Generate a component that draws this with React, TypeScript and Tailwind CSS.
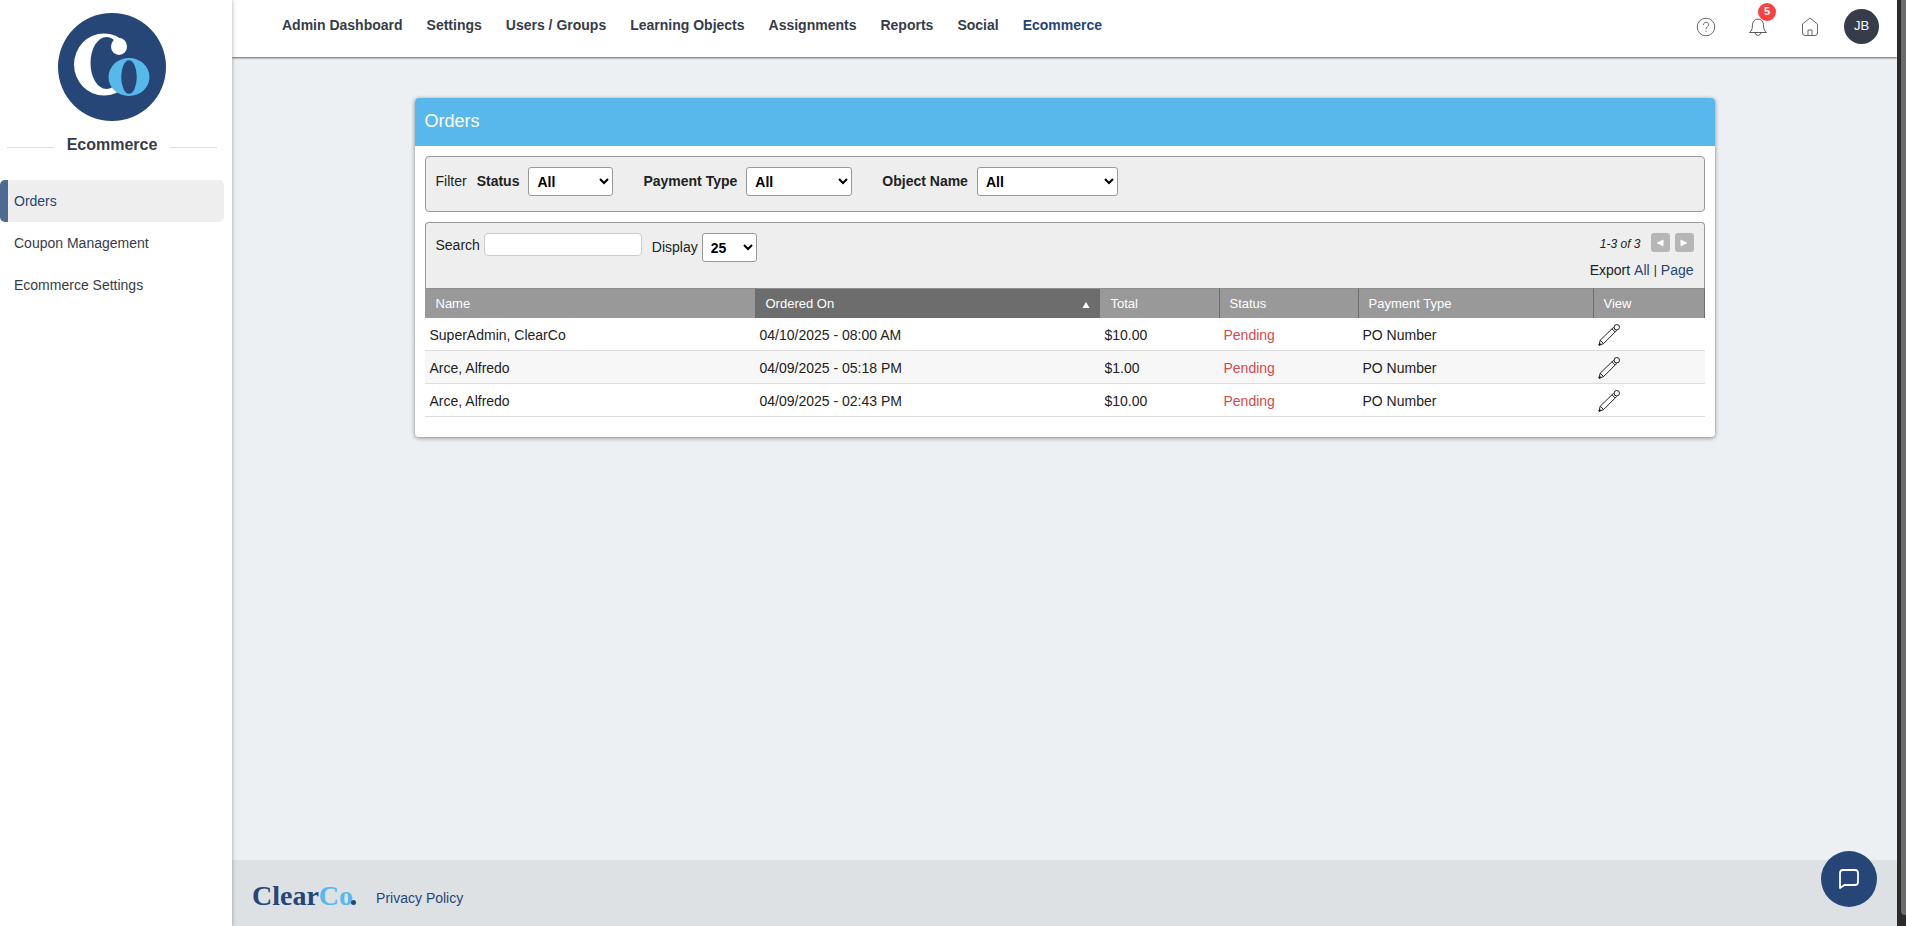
import type { ReactNode } from "react";

const navLinks = [
  "Admin Dashboard",
  "Settings",
  "Users / Groups",
  "Learning Objects",
  "Assignments",
  "Reports",
  "Social",
  "Ecommerce",
];

const sideLinks = ["Orders", "Coupon Management", "Ecommerce Settings"];

const orders = [
  { name: "SuperAdmin, ClearCo", date: "04/10/2025 - 08:00 AM", total: "$10.00" },
  { name: "Arce, Alfredo", date: "04/09/2025 - 05:18 PM", total: "$1.00" },
  { name: "Arce, Alfredo", date: "04/09/2025 - 02:43 PM", total: "$10.00" },
];

function Monogram() {
  return (
    <svg viewBox="0 0 108 108" className="size-[108px]" role="img" aria-label="ClearCo">
      <circle cx="54" cy="54" r="54" fill="#254677" />
      <ellipse cx="46" cy="51.5" rx="30" ry="31" fill="#fff" />
      <ellipse cx="48.5" cy="50" rx="16" ry="26" fill="#254677" />
      <rect x="53" y="36" width="26" height="26" fill="#254677" />
      <rect x="66" y="20" width="13" height="18" fill="#254677" />
      <ellipse cx="61" cy="33.5" rx="8" ry="8.5" fill="#fff" />
      <ellipse cx="71" cy="64" rx="20.5" ry="19" fill="#57b8ea" />
      <ellipse cx="71" cy="64" rx="7.8" ry="16.8" fill="#254677" />
    </svg>
  );
}

function Pencil() {
  return (
    <svg
      viewBox="0 0 22 22"
      className="size-[22px]"
      fill="none"
      stroke="#222"
      strokeWidth="1"
      strokeLinejoin="round"
    >
      <path d="M1 21.2 L2.2 16.2 L14 4.8 L17.2 8 L5.6 19.6 Z" />
      <path d="M2.2 16.2 L5.6 19.6" />
      <path d="M1 21.2 L2.6 19.6" strokeWidth="2" />
      <path d="M14 4.8 L15.4 3.6 L18.5 6.6 L17.2 8" />
      <circle cx="18.8" cy="3.2" r="2.7" />
    </svg>
  );
}

function Filter({ id, label, width }: { id: string; label: string; width: string }) {
  return (
    <div className="flex items-start gap-[9px]">
      <label htmlFor={id} className="leading-[29px] font-bold">
        {label}
      </label>
      <select
        id={id}
        className={`h-[29px] rounded-[3px] border border-[#999] bg-white pl-1 font-bold text-black ${width}`}
      >
        <option>All</option>
      </select>
    </div>
  );
}

function HeadCell({
  children,
  className,
}: {
  children: ReactNode;
  className: string;
}) {
  return (
    <th
      scope="col"
      className={`h-[30px] border-t border-l border-t-[#8e8e8e] px-[10px] pt-[2px] text-left text-[13px] font-normal text-white ${className}`}
    >
      {children}
    </th>
  );
}

export default function App() {
  return (
    <div className="flex min-h-screen bg-[#ecf0f3] font-['Liberation_Sans',Arial,sans-serif] text-sm text-[#222]">
      <aside className="z-10 w-[232px] shrink-0 bg-white pt-[13px] shadow-[0_0_4px_rgba(0,0,0,0.35)]">
        <div className="flex justify-center pr-2">
          <Monogram />
        </div>
        <div className="mt-3 flex items-center gap-[13px] pr-[15px] pl-[7px]">
          <span className="mt-[5px] h-px flex-1 bg-[#dedede]" />
          <h2 className="text-base font-bold text-[#363c4a]">Ecommerce</h2>
          <span className="mt-[5px] h-px flex-1 bg-[#dedede]" />
        </div>
        <nav className="mt-[23px] pr-2">
          {sideLinks.map((link, i) => (
            <a
              key={link}
              href="#"
              className={
                i === 0
                  ? "flex h-[42px] items-center rounded-[5px] border-l-8 border-[#4f6a92] bg-[#eee] pl-[6px] text-[#254677]"
                  : "flex h-[42px] items-center pl-[14px] text-[#363c4a]"
              }
            >
              {link}
            </a>
          ))}
        </nav>
      </aside>

      <div className="flex min-w-0 flex-1 flex-col">
        <header className="flex h-[57px] items-start justify-between bg-white pr-[18px] pl-[50px] shadow-[0_1px_2px_rgba(0,0,0,0.6)]">
          <nav className="flex gap-6 pt-[15px] font-bold text-[#363c4a]">
            {navLinks.map((link) => (
              <a
                key={link}
                href="#"
                className={link === "Ecommerce" ? "text-[#254677]" : ""}
              >
                {link}
              </a>
            ))}
          </nav>
          <div className="flex items-center pt-[9px]">
            <button type="button" aria-label="Help" className="mr-8">
              <svg viewBox="0 0 20 20" className="size-5" fill="none" stroke="#444" strokeWidth="0.8">
                <circle cx="10" cy="10" r="8.8" />
                <path d="M7.4 8 C7.4 4.4 12.6 4.4 12.6 7.8 C12.6 9.8 10 9.8 10 12.2 M10 13.6 V14.8" />
              </svg>
            </button>
            <button type="button" aria-label="Notifications" className="relative mr-8">
              <svg viewBox="0 0 20 20" className="size-5" fill="none" stroke="#333" strokeWidth="0.8" strokeLinejoin="round">
                <path d="M1.5 15.5 C3.5 14 4.2 12.5 4.4 9 C4.6 4.5 6.5 2.2 10 2.2 C13.5 2.2 15.4 4.5 15.6 9 C15.8 12.5 16.5 14 18.5 15.5 Z" />
                <path d="M7.2 15.6 C7.5 19.3 12.5 19.3 12.8 15.6" />
              </svg>
              <span className="absolute -top-[14px] left-[10px] flex size-[18px] items-center justify-center rounded-full bg-[#fc4040] text-[11px] font-bold text-white">
                5
              </span>
            </button>
            <a href="#" aria-label="Home" className="mr-6">
              <svg viewBox="0 0 20 20" className="size-5" fill="none" stroke="#444" strokeWidth="0.8" strokeLinejoin="round">
                <path d="M10 1 L17.5 7 V16 Q17.5 18.5 15 18.5 H5 Q2.5 18.5 2.5 16 V7 Z" />
                <path d="M8 18.5 V13 H12 V18.5" />
              </svg>
            </a>
            <button
              type="button"
              className="flex size-[35px] items-center justify-center rounded-full bg-[#363c4a] text-[13px] text-white"
            >
              JB
            </button>
          </div>
        </header>

        <main className="flex-1 px-6 pt-[41px]">
          <section className="mx-auto max-w-[1300px] rounded-[4px] bg-white pb-5 shadow-[0_1px_4px_rgba(0,0,0,0.45)]">
            <h1 className="flex h-12 items-center rounded-t-[4px] bg-[#58b8eb] pb-[2px] pl-[10px] text-lg text-white">
              Orders
            </h1>
            <div className="px-[10px] pt-[10px]">
              <div className="flex gap-[10px] rounded-[4px] border border-[#999] bg-[#eee] px-[10px] pt-[10px] pb-[15px]">
                <span className="leading-[29px]">Filter</span>
                <div className="flex gap-[30px]">
                  <Filter id="status" label="Status" width="w-[85px]" />
                  <Filter id="payment" label="Payment Type" width="w-[106px]" />
                  <Filter id="object" label="Object Name" width="w-[141px]" />
                </div>
              </div>

              <div className="mt-[10px] flex h-[66px] items-start justify-between rounded-t-[4px] border border-b-0 border-[#999] bg-[#eee] p-[10px]">
                <div className="flex items-start gap-[10px]">
                  <div className="flex items-center gap-1">
                    <label htmlFor="search">Search</label>
                    <input
                      id="search"
                      type="text"
                      className="h-[23px] w-[158px] rounded-[4px] border border-[#ccc] bg-white px-1"
                    />
                  </div>
                  <div className="flex items-start gap-1">
                    <label htmlFor="display" className="leading-[29px]">
                      Display
                    </label>
                    <select
                      id="display"
                      className="h-[29px] w-[55px] rounded-[3px] border border-[#999] bg-white pl-1 font-bold text-black"
                    >
                      <option>25</option>
                    </select>
                  </div>
                </div>
                <div className="flex flex-col items-end">
                  <div className="flex h-[19px] items-center gap-[5px]">
                    <span className="mr-[5px] pt-[2px] text-xs italic">1-3 of 3</span>
                    <button
                      type="button"
                      aria-label="Previous page"
                      className="flex size-[19px] items-center justify-center rounded-[3px] bg-[#b6b6b6]"
                    >
                      <svg viewBox="0 0 8 8" className="size-2" fill="#fff">
                        <path d="M7.5 0.5 V7.5 L0.5 4 Z" />
                      </svg>
                    </button>
                    <button
                      type="button"
                      aria-label="Next page"
                      className="flex size-[19px] items-center justify-center rounded-[3px] bg-[#b6b6b6]"
                    >
                      <svg viewBox="0 0 8 8" className="size-2" fill="#fff">
                        <path d="M0.5 0.5 V7.5 L7.5 4 Z" />
                      </svg>
                    </button>
                  </div>
                  <div className="mt-2 flex items-center gap-1">
                    <span>Export</span>
                    <a href="#" className="text-[#254677]">
                      All
                    </a>
                    <span className="text-xs">|</span>
                    <a href="#" className="text-[#254677]">
                      Page
                    </a>
                  </div>
                </div>
              </div>

              <table className="w-full table-fixed border-separate border-spacing-0">
                <thead>
                  <tr>
                    <HeadCell className="w-[330px] border-l-[#999] bg-[#999]">Name</HeadCell>
                    <HeadCell className="w-[345px] border-l-[#6d6d6d] bg-[#6d6d6d]">
                      <span className="flex items-center justify-between">
                        Ordered On
                        <svg viewBox="0 0 8 8" className="size-2" fill="#fff">
                          <path d="M4 1 L7.6 7 H0.4 Z" />
                        </svg>
                      </span>
                    </HeadCell>
                    <HeadCell className="w-[119px] border-l-[#999] bg-[#999]">Total</HeadCell>
                    <HeadCell className="w-[139px] border-l-[#6d6d6d] bg-[#999]">Status</HeadCell>
                    <HeadCell className="w-[235px] border-l-[#6d6d6d] bg-[#999]">
                      Payment Type
                    </HeadCell>
                    <HeadCell className="border-r border-r-[#6d6d6d] border-l-[#6d6d6d] bg-[#999]">
                      View
                    </HeadCell>
                  </tr>
                </thead>
                <tbody>
                  {orders.map((order, i) => (
                    <tr
                      key={order.date}
                      className={
                        i % 2 === 1
                          ? "bg-[#f7f7f7] *:h-[33px] *:border-b *:border-[#ddd] *:px-[5px] *:pt-px"
                          : "bg-white *:h-[33px] *:border-b *:border-[#ddd] *:px-[5px] *:pt-px"
                      }
                    >
                      <td>{order.name}</td>
                      <td>{order.date}</td>
                      <td>{order.total}</td>
                      <td className="text-[#d64a4c]">Pending</td>
                      <td>PO Number</td>
                      <td>
                        <button
                          type="button"
                          aria-label={`View order of ${order.name}`}
                          className="block"
                        >
                          <Pencil />
                        </button>
                      </td>
                    </tr>
                  ))}
                </tbody>
              </table>
            </div>
          </section>
        </main>

        <footer className="flex h-[66px] items-center gap-5 bg-[#dee1e4] pt-[6px] pl-5">
          <div className="flex items-baseline font-['Liberation_Serif',serif] text-[28px] leading-8 font-bold text-[#254677]">
            <span>Clear</span>
            <span className="text-[#57b8ea]">Co</span>
            <span className="-ml-[2px] size-[5px] rounded-full bg-[#254677]" />
          </div>
          <a href="#" className="pt-[3px] text-[#254677]">
            Privacy Policy
          </a>
        </footer>
      </div>

      <div className="flex w-[9px] shrink-0 bg-[#2b2b2b] pb-[11px] pl-1">
        <div className="flex-1 rounded-bl-[4px] bg-[#6b6b6b]" />
      </div>

      <button
        type="button"
        aria-label="Open chat"
        className="fixed right-[29px] bottom-[19px] z-20 flex size-14 items-center justify-center rounded-full bg-[#254677]"
      >
        <svg
          viewBox="0 0 22 22"
          className="size-[22px]"
          fill="none"
          stroke="#fff"
          strokeWidth="1.8"
          strokeLinejoin="round"
        >
          <path d="M2 20 V5 Q2 2 5 2 H17 Q20 2 20 5 V14 Q20 17 17 17 H6.5 Z" />
        </svg>
      </button>
    </div>
  );
}
